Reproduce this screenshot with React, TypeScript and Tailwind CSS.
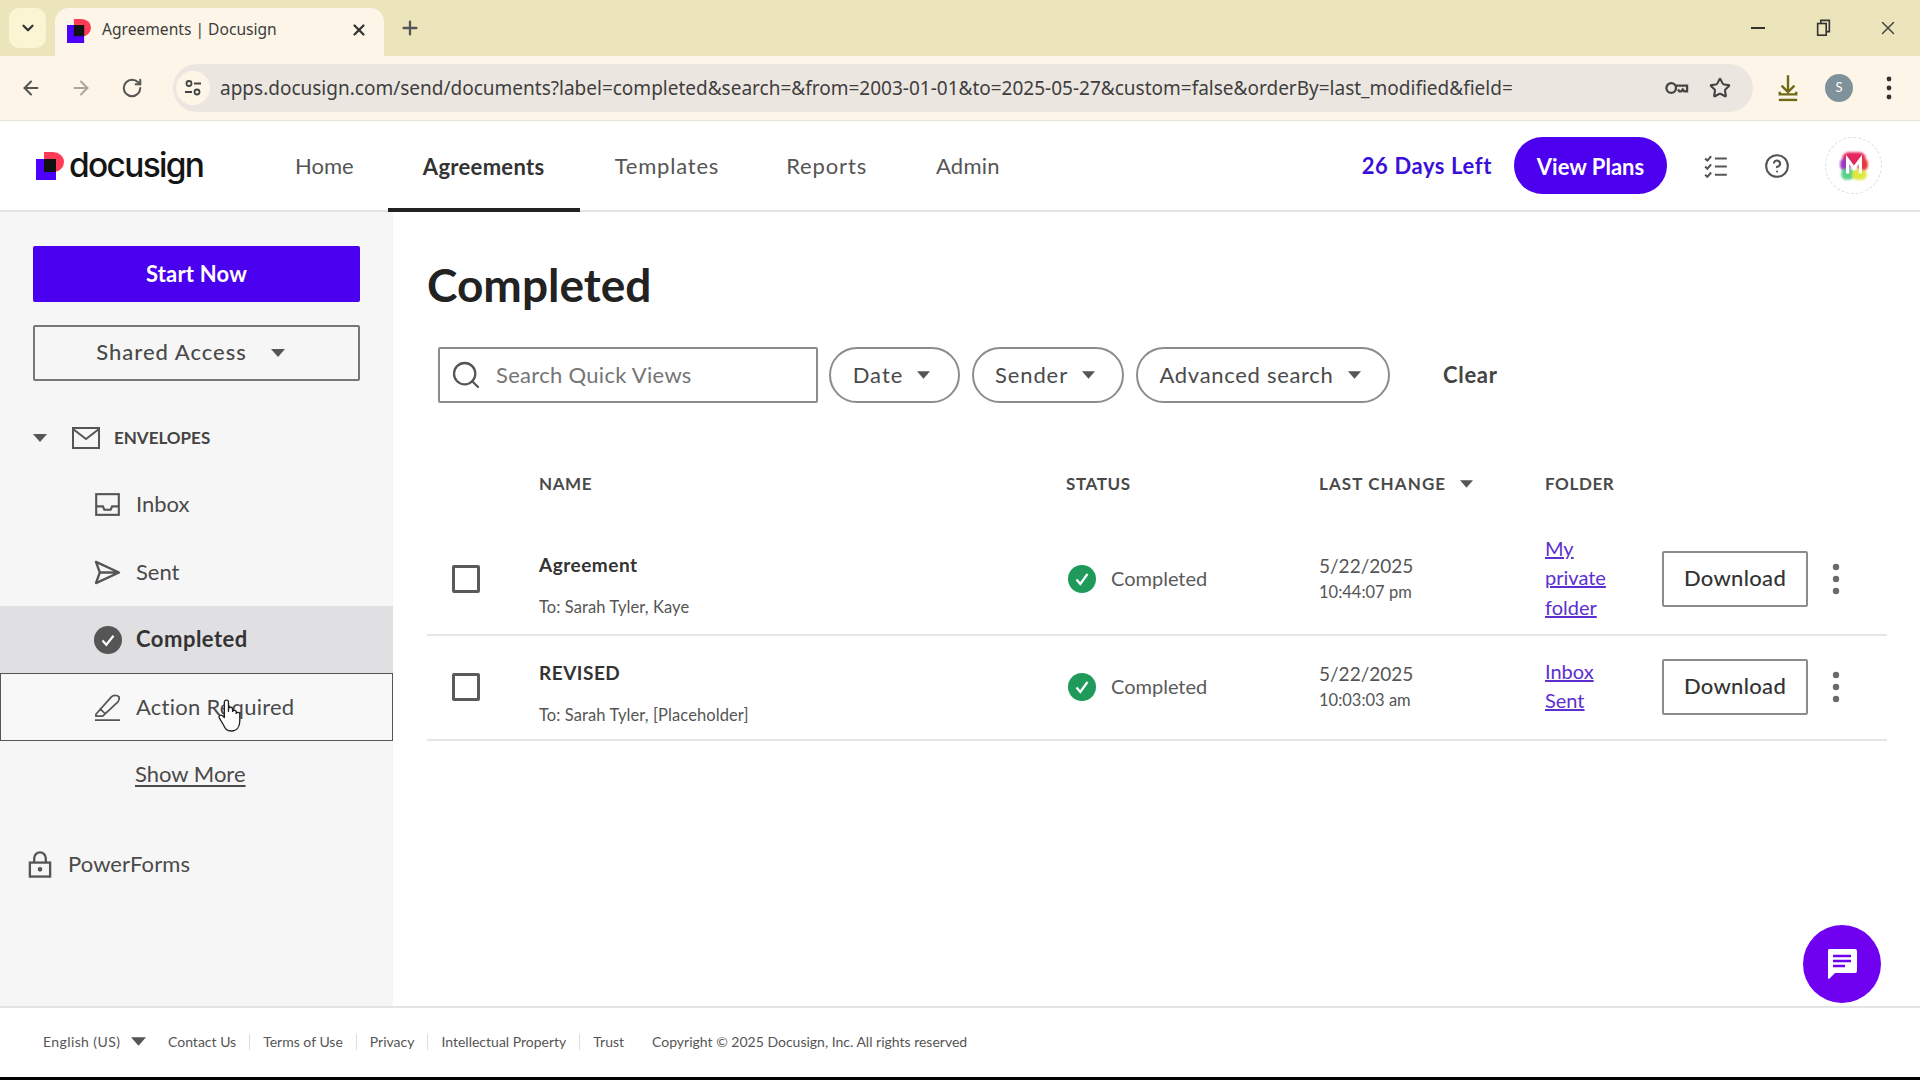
import React from "react";
import { ArrowLeft, ArrowRight, RotateCw, Star, Plus, X, ChevronDown, Search, CircleHelp } from "lucide-react";

const Caret = ({ className = "" }: { className?: string }) => (
  <svg viewBox="0 0 14 8" className={className} fill="#555">
    <polygon points="0,0 14,0 7,8" />
  </svg>
);

const Mark = ({ className = "" }: { className?: string }) => (
  <svg viewBox="0 0 28 28" className={className}>
    <path d="M8 0h9a11 10 0 0 1 11 10a10 10 0 0 1-10 10H8z" fill="#ff3b55" />
    <rect x="0" y="7" width="20" height="21" fill="#4c00ff" />
    <rect x="8" y="7" width="12" height="13" fill="#111" />
  </svg>
);

const Dots = ({ className = "", fill = "#6a6a6a" }: { className?: string; fill?: string }) => (
  <svg viewBox="0 0 8 32" className={className} fill={fill}>
    <circle cx="4" cy="4" r="3.2" />
    <circle cx="4" cy="16" r="3.2" />
    <circle cx="4" cy="28" r="3.2" />
  </svg>
);

const GreenCheck = () => (
  <svg viewBox="0 0 28 28" className="w-[28px] h-[28px]">
    <circle cx="14" cy="14" r="14" fill="#1f9a5b" />
    <path d="M8.5 14.5l3.8 4.5 7.2-10" fill="none" stroke="#fff" strokeWidth="2.2" />
  </svg>
);

const SideItem = ({ icon, label, cls = "h-[68px] text-[#4a4a4a]" }: { icon: React.ReactNode; label: string; cls?: string }) => (
  <div className={`flex items-center pl-[94px] text-[22px] ${cls}`}>
    <span className="w-[42px] flex items-center">{icon}</span>
    <span className="mb-[2px]">{label}</span>
  </div>
);

const Pill = ({ label, w, track }: { label: string; w: string; track: string }) => (
  <div className={`h-[56px] ${w} flex items-center justify-center gap-[14px] pr-[6px] border-2 border-[#8c8c8c] rounded-[28px] text-[22px] text-[#4a4a4a]`}>
    <span className={`mb-[2px] ${track}`}>{label}</span>
    <Caret className="w-[13px] h-[8px]" />
  </div>
);

const Row = ({ h, name, to, date, time, folder }: { h: string; name: string; to: string; date: string; time: string; folder: string[] }) => (
  <div className={`grid grid-cols-[112px_527px_253px_226px_117px_225px] items-center ${h} pb-[2px] border-b-2 border-[#e6e6e6]`}>
    <div className="pl-[25px]">
      <div className="w-[28px] h-[28px] border-[3px] border-[#5a5a5a] rounded-[2px]" />
    </div>
    <div className="pt-[15px] flex flex-col gap-[20px]">
      <span className="text-[19px] leading-[22px] font-bold text-[#333] tracking-[0.5px]">{name}</span>
      <span className="text-[16.5px] leading-[22px] text-[#555] tracking-[0.1px]">{to}</span>
    </div>
    <div className="flex items-center gap-[15px] pl-[2px] text-[20px] text-[#5a5a5a]">
      <GreenCheck />
      <span className="mb-[1px]">Completed</span>
    </div>
    <div className="flex flex-col text-[#555]">
      <span className="text-[19px] leading-[27px]">{date}</span>
      <span className="text-[16.5px] leading-[27px]">{time}</span>
    </div>
    <div className="flex flex-col text-[20px] leading-[29.5px] text-[#5b2fd0] underline mb-[1px]">
      {folder.map((f) => (
        <span key={f}>{f}</span>
      ))}
    </div>
    <div className="flex items-center">
      <div className="w-[146px] h-[56px] flex items-center justify-center border-2 border-[#8c8c8c] rounded-[2px] text-[22px] font-medium text-[#333]">
        <span className="mb-[2px] tracking-[0.3px]">Download</span>
      </div>
      <Dots className="w-[8px] h-[32px] ml-[24px]" />
    </div>
  </div>
);

export default function App() {
  return (
    <div className="relative w-[1920px] h-[1080px] overflow-hidden flex flex-col bg-white font-['Lato',sans-serif]">
      {/* tab strip */}
      <div className="h-[56px] bg-[#ece5bb] flex items-end pl-[9px] shrink-0">
        <div className="w-[37px] h-[40px] mb-[8px] rounded-[10px] bg-[#fbf5d3] flex items-center justify-center">
          <ChevronDown className="w-[18px] h-[18px] text-[#333]" strokeWidth={3} />
        </div>
        <div className="ml-[9px] w-[329px] h-[48px] rounded-t-[14px] bg-[#fdf6e8] flex items-center pl-[12px] pr-[16px]">
          <Mark className="w-[24px] h-[24px] mb-[2px]" />
          <span className="ml-[11px] mb-[4px] text-[15.6px] text-[#3c3c3c] font-['Noto_Sans',sans-serif]">Agreements | Docusign</span>
          <X className="ml-auto mb-[4px] w-[18px] h-[18px] text-[#333]" strokeWidth={3} />
        </div>
        <Plus className="ml-[15px] mb-[17px] w-[22px] h-[22px] text-[#555]" strokeWidth={2.5} />
        <div className="ml-auto flex items-center h-full pb-[1px]">
          <svg viewBox="0 0 14 2" className="w-[14px] h-[2px] mr-[51px]" fill="#333">
            <rect width="14" height="2" />
          </svg>
          <svg viewBox="0 0 16 20" className="w-[15px] h-[18px] mr-[46px]" fill="none" stroke="#333" strokeWidth="1.8">
            <rect x="1.5" y="5" width="9.5" height="13" />
            <path d="M5 5V1.5h9.5V14H11" />
          </svg>
          <X className="w-[22px] h-[22px] text-[#444] mr-[21px]" strokeWidth={1.6} />
        </div>
      </div>

      {/* toolbar */}
      <div className="h-[65px] bg-[#fdf6e8] flex items-center shrink-0 border-b border-[#e9e4da]">
        <ArrowLeft className="ml-[20px] w-[22px] h-[22px] text-[#555]" strokeWidth={2.2} />
        <ArrowRight className="ml-[28px] w-[22px] h-[22px] text-[#aaa69e]" strokeWidth={2.2} />
        <RotateCw className="ml-[29px] w-[22px] h-[22px] text-[#555]" strokeWidth={2.2} />
        <div className="ml-[30px] w-[1580px] h-[48px] rounded-[24px] bg-[#ece6e1] flex items-center pl-[3px] pr-[22px]">
          <div className="w-[34px] h-[34px] rounded-full bg-[#fdf6e8] flex items-center justify-center">
            <svg viewBox="0 0 20 20" className="w-[20px] h-[20px]" fill="none" stroke="#444" strokeWidth="1.8">
              <circle cx="6" cy="5.5" r="2.5" />
              <path d="M11 5.5h7M2 14h7" />
              <circle cx="14" cy="14" r="2.5" />
            </svg>
          </div>
          <span className="ml-[10px] text-[19px] text-[#3e3e3e] font-['Noto_Sans',sans-serif] whitespace-nowrap">
            apps.docusign.com/send/documents?label=completed&amp;search=&amp;from=2003-01-01&amp;to=2025-05-27&amp;custom=false&amp;orderBy=last_modified&amp;field=
          </span>
          <svg viewBox="0 0 26 18" className="ml-auto w-[25px] h-[18px]" fill="none" stroke="#444" strokeWidth="2.4">
            <circle cx="7.5" cy="9" r="5" />
            <path d="M12.5 6.5H24v6h-3l-1.5-2-1.5 2h-2l-1.5-2" />
          </svg>
          <Star className="ml-[20px] w-[22px] h-[22px] text-[#444]" strokeWidth={2.3} />
        </div>
        <svg viewBox="0 0 24 30" className="ml-[24px] w-[22px] h-[28px]" fill="none" stroke="#6e6a16" strokeWidth="2.6">
          <path d="M12 1v18M5 12.5l7 7 7-7M3 19v3h18v-3" />
          <path d="M2 28h20" />
        </svg>
        <div className="ml-[26px] w-[28px] h-[28px] rounded-full bg-[#7f929c] flex items-center justify-center text-[13px] text-white">S</div>
        <Dots className="ml-[33px] w-[6px] h-[24px]" fill="#333" />
      </div>

      {/* nav */}
      <div className="h-[91px] shrink-0 flex items-center border-b-2 border-[#e2e2e2] pl-[36px]">
        <Mark className="w-[28px] h-[28px]" />
        <span className="ml-[5px] w-[133px] text-[33.5px] leading-none font-medium text-[#151515] font-['Inter',sans-serif] tracking-[-1.7px]">docusign</span>
        <span className="ml-[93px] text-[22px] text-[#555]">Home</span>
        <div className="ml-[34px] w-[192px] self-stretch flex items-center justify-center border-b-[4px] border-[#222] text-[22px] font-bold text-[#333] tracking-[0.3px] pt-[4px] mb-[-2px]">
          Agreements
        </div>
        <span className="ml-[35px] text-[22px] text-[#555] tracking-[0.8px]">Templates</span>
        <span className="ml-[67px] text-[22px] text-[#555] tracking-[0.85px]">Reports</span>
        <span className="ml-[69px] text-[22px] text-[#555] tracking-[0.2px]">Admin</span>
        <span className="ml-auto text-[22px] font-bold text-[#3a10d8] tracking-[0.6px]">26 Days Left</span>
        <div className="ml-[22px] w-[153px] h-[57px] rounded-[29px] bg-[#4c00ee] flex items-center justify-center text-[22px] font-bold text-white pt-[1px]">
          View Plans
        </div>
        <svg viewBox="0 0 24 24" className="ml-[36px] w-[26px] h-[26px]" fill="none" stroke="#555" strokeWidth="1.9">
          <path d="M2 5l2 2 3.5-4M2 12.5l2 2 3.5-4M2 20l2 2 3.5-4M11 5h11M11 12.5h11M11 20h11" />
        </svg>
        <CircleHelp className="ml-[35px] w-[26px] h-[26px] text-[#555]" strokeWidth={1.9} />
        <div className="ml-[35px] mr-[38px] w-[57px] h-[57px] rounded-full border border-dashed border-[#ddd] flex items-center justify-center">
          <svg viewBox="0 0 30 32" className="w-[32px] h-[34px]">
            <g className="blur-[1px]">
              <rect x="4" y="3" width="22" height="13" rx="6" fill="#e5265c" />
              <rect x="2" y="9" width="10" height="11" rx="4" fill="#9a3ac0" />
              <rect x="18" y="9" width="10" height="11" rx="4" fill="#e5393f" />
              <rect x="3" y="18" width="12" height="11" rx="5" fill="#5cd08a" />
              <rect x="13" y="19" width="14" height="10" rx="5" fill="#dfe83a" />
            </g>
            <path d="M9 23V10l6 8 6-8v13" fill="none" stroke="#fff" strokeWidth="3" />
          </svg>
        </div>
      </div>

      {/* body */}
      <div className="flex flex-1 min-h-0">
        <aside className="w-[393px] bg-[#f7f6f7] shrink-0 pt-[34px]">
          <div className="mx-[33px] h-[56px] bg-[#4a00ee] rounded-[2px] flex items-center justify-center text-[22px] font-bold text-white">
            <span className="mb-[2px] tracking-[0.2px]">Start Now</span>
          </div>
          <div className="mx-[33px] mt-[23px] h-[56px] border-2 border-[#777] rounded-[2px] flex items-center justify-center gap-[24px] pr-[12px] text-[22px] font-medium text-[#4a4a4a]">
            <span className="mb-[4px] tracking-[1px]">Shared Access</span>
            <Caret className="w-[14px] h-[8px]" />
          </div>
          <div className="mt-[37px] mb-[12px] h-[40px] flex items-center pl-[33px]">
            <Caret className="w-[14px] h-[8px]" />
            <svg viewBox="0 0 28 22" className="ml-[25px] w-[28px] h-[22px]" fill="none" stroke="#555" strokeWidth="2">
              <rect x="1" y="1" width="26" height="20" />
              <path d="M1 2l13 10L27 2" />
            </svg>
            <span className="ml-[14px] text-[17px] font-bold text-[#444]">ENVELOPES</span>
          </div>
          <SideItem
            label="Inbox"
            icon={
              <svg viewBox="0 0 26 24" className="ml-[1px] w-[25px] h-[23px]" fill="none" stroke="#555" strokeWidth="2.2">
                <rect x="1.2" y="1.2" width="23.6" height="21.6" />
                <path d="M1.2 14h7l1.5 3.5h6.6l1.5-3.5h7" />
              </svg>
            }
          />
          <SideItem
            label="Sent"
            icon={
              <svg viewBox="0 0 28 26" className="w-[27px] h-[25px]" fill="none" stroke="#555" strokeWidth="2.4" strokeLinejoin="round">
                <path d="M2 2l24 11L2 24l4-11zM6 13h20" />
              </svg>
            }
          />
          <SideItem
            cls="bg-[#e0dfe1] h-[67px] font-bold text-[#333] tracking-[0.5px]"
            label="Completed"
            icon={
              <svg viewBox="0 0 28 28" className="w-[28px] h-[28px]">
                <circle cx="14" cy="14" r="14" fill="#555" />
                <path d="M8.5 14.5l3.8 4.2 7.2-9" fill="none" stroke="#fff" strokeWidth="2.2" />
              </svg>
            }
          />
          <div className="border border-[#555] bg-[#f9f8f9]">
            <SideItem
              cls="h-[66px] text-[#4a4a4a] -ml-[1px] tracking-[0.25px]"
              label="Action Required"
              icon={
                <svg viewBox="0 0 28 28" className="w-[27px] h-[27px]" fill="none" stroke="#555" strokeWidth="1.8" strokeLinejoin="round">
                  <path d="M2 21L18 3c2-2 6-2 8 0 .6 2-.4 4-2 6L9 23H2zM6 15l6 6M1 27h26" />
                </svg>
              }
            />
          </div>
          <div className="h-[65px] pl-[135px] flex items-center text-[22px] text-[#4a4a4a]">
            <span className="underline underline-offset-[3px]">Show More</span>
          </div>
          <div className="mt-[24px] h-[68px] flex items-center pl-[28px] text-[22px] text-[#4a4a4a]">
            <svg viewBox="0 0 24 28" className="w-[24px] h-[27px] mr-[16px]" fill="none" stroke="#555" strokeWidth="2.4">
              <rect x="1.5" y="12" width="21" height="14.5" />
              <path d="M6 12V7.5a6 6 0 0 1 12 0V12" />
              <circle cx="12" cy="19" r="1.2" fill="#555" />
            </svg>
            <span className="mb-[2px] tracking-[0.1px]">PowerForms</span>
          </div>
        </aside>

        <main className="flex-1 pl-[34px] pr-[33px] pt-[45px]">
          <h1 className="text-[46px] leading-[56px] font-bold text-[#222]">Completed</h1>
          <div className="mt-[34px] ml-[11px] flex items-center">
            <div className="w-[380px] h-[56px] border-2 border-[#8c8c8c] rounded-[2px] flex items-center pl-[10px] mr-[11px]">
              <Search className="w-[32px] h-[32px] text-[#555]" strokeWidth={1.7} />
              <span className="ml-[14px] mb-[2px] text-[22px] text-[#757575] tracking-[0.3px]">Search Quick Views</span>
            </div>
            <Pill label="Date" w="w-[131px]" track="tracking-[1px]" />
            <div className="w-[12px]" />
            <Pill label="Sender" w="w-[152px]" track="tracking-[0.9px]" />
            <div className="w-[12px]" />
            <Pill label="Advanced search" w="w-[254px]" track="tracking-[0.7px]" />
            <span className="ml-[53px] mb-[2px] text-[22px] font-bold text-[#444] tracking-[0.7px]">Clear</span>
          </div>
          <div className="mt-[61px] mb-[21px] h-[40px] grid grid-cols-[112px_527px_253px_226px_117px_225px] items-center text-[17px] font-bold tracking-[0.6px] text-[#4a4a4a]">
            <span />
            <span>NAME</span>
            <span>STATUS</span>
            <span className="flex items-center gap-[14px] tracking-[1.1px]">
              LAST CHANGE
              <Caret className="w-[13px] h-[8px]" />
            </span>
            <span className="mb-[1px]">FOLDER</span>
            <span />
          </div>
          <Row h="h-[111px]" name="Agreement" to="To: Sarah Tyler, Kaye" date="5/22/2025" time="10:44:07 pm" folder={["My", "private", "folder"]} />
          <Row h="h-[105px]" name="REVISED" to="To: Sarah Tyler, [Placeholder]" date="5/22/2025" time="10:03:03 am" folder={["Inbox", "Sent"]} />
        </main>
      </div>

      {/* footer */}
      <div className="h-[71px] shrink-0 border-t-2 border-[#e4e4e4] flex items-center pl-[43px] pb-[2px] text-[14px] text-[#555]">
        <span className="w-[88px] tracking-[0.4px]">English (US)</span>
        <Caret className="w-[15px] h-[9px]" />
        <span className="ml-[22px]">Contact Us</span>
        <span className="mx-[13px] w-px h-[16px] bg-[#ddd]" />
        <span>Terms of Use</span>
        <span className="mx-[13px] w-px h-[16px] bg-[#ddd]" />
        <span>Privacy</span>
        <span className="mx-[13px] w-px h-[16px] bg-[#ddd]" />
        <span>Intellectual Property</span>
        <span className="mx-[13px] w-px h-[16px] bg-[#ddd]" />
        <span>Trust</span>
        <span className="ml-[28px]">Copyright © 2025 Docusign, Inc. All rights reserved</span>
      </div>
      <div className="h-[3px] bg-black shrink-0" />

      {/* floating chat */}
      <div className="absolute left-[1803px] top-[925px] w-[78px] h-[78px] rounded-full bg-[#6f00f0] flex items-center justify-center">
        <svg viewBox="0 0 32 32" className="w-[32px] h-[32px]">
          <path d="M3 1h26a2 2 0 0 1 2 2v20a2 2 0 0 1-2 2H9l-6 6a1 1 0 0 1-1-1V3a2 2 0 0 1 1-2z" fill="#fff" />
          <path d="M7 8h18M7 13h18M7 18h12" stroke="#6f00f0" strokeWidth="2.6" />
        </svg>
      </div>

      {/* mouse cursor */}
      <svg viewBox="0 0 24 33" className="absolute left-[217px] top-[698px] w-[25px] h-[34px]" fill="#fff" stroke="#222" strokeWidth="1.3" strokeLinejoin="round">
        <path d="M7 19V4a2 2 0 0 1 4 0v9-2a2 2 0 0 1 4 0v2a2 2 0 0 1 3.5 0v2a2 2 0 0 1 3.5 0v7c0 6-3 10-8 10-5 0-6-2-8-6l-4-7c-1-2 1-3 3-2z" />
      </svg>
    </div>
  );
}
